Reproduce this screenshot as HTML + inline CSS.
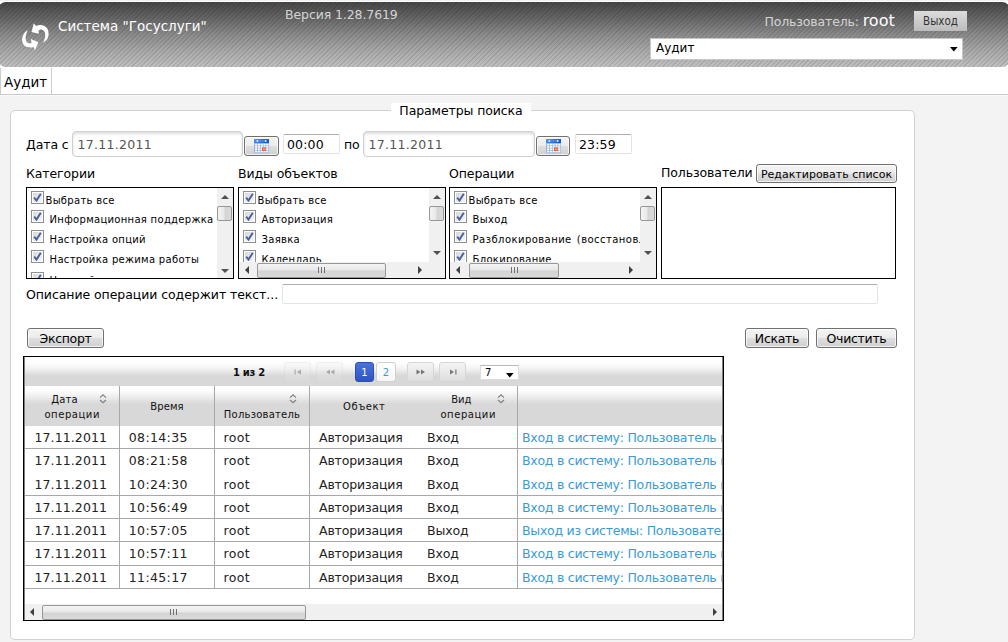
<!DOCTYPE html>
<html lang="ru">
<head>
<meta charset="utf-8">
<title>Аудит</title>
<style>
html,body{margin:0;padding:0;}
body{width:1008px;height:642px;overflow:hidden;position:relative;background:#f3f3f3;font-family:"DejaVu Sans","Liberation Sans",sans-serif;font-size:12.5px;color:#000;letter-spacing:-0.1px;}
.a{position:absolute;white-space:nowrap;box-sizing:border-box;}
#topwhite{left:0;top:0;width:1008px;height:94px;background:#fff;}
#topline{left:0;top:0;width:1008px;height:1px;background:#f0f0f0;}
#hdr{left:-2px;top:2px;width:1012px;height:65px;border-radius:8px;overflow:hidden;
 background:linear-gradient(to bottom,#464646 0%,#666666 25%,#8b8b8b 50%,#a9a9a9 75%,#c0c0c0 100%);}
#hdr .stripes{position:absolute;left:0;top:0;width:100%;height:100%;
 background:repeating-linear-gradient(135deg,rgba(0,0,0,0.11) 0,rgba(0,0,0,0.11) 0.9px,rgba(0,0,0,0) 1.3px,rgba(0,0,0,0) 3.18px);}
#title{left:58px;top:16px;font-size:13.5px;color:#fff;line-height:20px;letter-spacing:0;}
#ver{left:285px;top:5px;font-size:12.5px;color:#d4d4d4;line-height:20px;letter-spacing:-0.1px;}
#user{left:764.5px;top:9px;font-size:12.5px;color:#d4d4d4;line-height:24px;letter-spacing:-0.15px;}
#user b{font-weight:normal;font-size:16px;color:#fff;letter-spacing:0;}
#exit{left:914px;top:11px;width:53px;height:20px;background:linear-gradient(#dcdcdc,#bcbcbc);color:#333;font-family:"DejaVu Sans Condensed","DejaVu Sans",sans-serif;font-size:11.5px;line-height:20px;text-align:center;letter-spacing:0;}
#sel{left:650px;top:38px;width:313px;height:22px;background:#fff;border:1px solid #c8c8c8;font-size:12px;line-height:18px;padding-left:5px;letter-spacing:0;}
#sel svg{position:absolute;left:299px;top:8px;}
#tabline{left:0;top:94px;width:1008px;height:1px;background:#c9c9c9;box-shadow:0 1px 0 #fafafa;}
#tab{left:0;top:68px;width:52px;height:26px;border-left:1px solid #ccc;border-right:1px solid #ccc;font-size:13.5px;line-height:28px;padding-left:3px;letter-spacing:0;}
#fs{left:10px;top:110px;width:905px;height:530px;background:#fff;border:1px solid #d2d2d2;border-radius:5px;}
#legend{left:391px;top:103px;width:140px;height:16px;background:#fff;text-align:center;line-height:16px;}
.lbl{line-height:16px;}
.inp{background:#fff;border:1px solid #cfcfcf;border-radius:4px;box-shadow:inset 0 2px 3px rgba(0,0,0,0.13);color:#555;padding-left:4.5px;letter-spacing:0.3px;}
.tinp{border-radius:2px;background:#fff;border:1px solid #e2e3ea;border-top-color:#abadb3;color:#000;padding-left:3px;letter-spacing:0.15px;}
.btn{border:1px solid #707070;border-radius:3px;background:linear-gradient(#f4f4f4 0%,#ececec 48%,#dedede 52%,#d0d0d0 100%);box-shadow:inset 0 0 0 1px rgba(255,255,255,0.7);text-align:center;color:#000;}
.box{border:1px solid #000;background:#fff;overflow:hidden;}
.cb{width:13px;height:13px;border:1px solid #8e8f8f;background:#fff;}
.cb:before{content:"";position:absolute;left:1px;top:1px;width:9px;height:9px;background:linear-gradient(135deg,#d6d9dc,#f6f6f6);}
.cb svg{position:absolute;left:1px;top:1px;}
.it{font-size:10px;letter-spacing:0.3px;line-height:14px;color:#000;}
.sbv{background:#f0f0f0;width:16px;}
.sbh{background:#f0f0f0;height:16px;}
.thv{border:1px solid #979797;border-radius:2px;background:linear-gradient(to right,#f4f4f4 0%,#e8e8e8 45%,#d4d4d4 55%,#dadada 100%);}
.thh{border:1px solid #979797;border-radius:2px;background:linear-gradient(to bottom,#f4f4f4 0%,#e8e8e8 45%,#d4d4d4 55%,#dadada 100%);}
.tri{width:0;height:0;border:4px solid transparent;}
.up{border-bottom:4px solid #505050;border-top:none;border-left-width:4px;border-right-width:4px;}
.dn{border-top:4px solid #505050;border-bottom:none;border-left-width:4px;border-right-width:4px;}
.lt{border-right:4px solid #404040;border-left:none;border-top-width:4px;border-bottom-width:4px;}
.rt{border-left:4px solid #404040;border-right:none;border-top-width:4px;border-bottom-width:4px;}
.grip{width:7px;height:6px;background:repeating-linear-gradient(to right,#707070 0,#707070 1px,transparent 1px,transparent 2px,transparent 2px,transparent 3px);}
#grid{left:23px;top:356px;width:701px;height:265px;border:1px solid #000;box-shadow:inset 0 0 0 1px rgba(0,0,0,0.5);background:#fff;overflow:hidden;}
#pag{left:25px;top:357px;width:697px;height:29px;background:linear-gradient(#ffffff 0%,#fdfdfd 22%,#f1f1f1 42%,#dfdfdf 58%,#d8d8d8 66%,#d8d8d8 100%);}
#thead{left:25px;top:386px;width:697px;height:40px;background:linear-gradient(#ffffff 0%,#fdfdfd 12%,#eeeeee 27%,#dddddd 40%,#d8d8d8 47%,#d8d8d8 100%);}
.th{font-size:10px;letter-spacing:0;color:#111;line-height:14px;text-align:center;}
.vl{width:1px;background:#a8a8a8;}
.hl{height:1px;background:#a8a8a8;left:25px;width:697px;}
.td{font-size:12.5px;letter-spacing:-0.15px;color:#222;line-height:16px;}
.lnk{color:#3a9bd3;}
.pb{border:1px solid #d6d6d6;border-radius:3px;background:linear-gradient(#f4f4f4,#dedede);}
</style>
</head>
<body>
<div class="a" id="topwhite"></div><div class="a" id="topline"></div>
<div class="a" id="hdr"><div class="stripes"></div></div>
<svg class="a" style="left:15px;top:17px" width="40" height="40" viewBox="0 0 40 40"><path d="M28.30 25.90 C28.98 25.22 31.52 23.32 32.40 21.80 C33.28 20.28 33.60 18.47 33.60 16.80 C33.60 15.13 33.12 13.10 32.40 11.80 C31.68 10.50 30.55 9.62 29.30 9.00 C28.05 8.38 26.25 8.10 24.90 8.10 C23.55 8.10 21.82 8.85 21.20 9.00 L18.70 6.50 L16.50 15.00 L24.00 16.80 L23.40 13.40 C23.87 13.25 25.27 12.40 26.20 12.50 C27.13 12.60 28.33 13.18 29.00 14.00 C29.67 14.82 30.10 16.10 30.20 17.40 C30.30 18.70 29.92 20.38 29.60 21.80 C29.28 23.22 28.52 25.22 28.30 25.90 Z" fill="#fff"/><path d="M13.10 13.10 C12.47 13.62 10.28 14.85 9.30 16.20 C8.32 17.55 7.45 19.53 7.20 21.20 C6.95 22.87 7.18 24.80 7.80 26.20 C8.42 27.60 9.60 28.88 10.90 29.60 C12.20 30.32 14.30 30.45 15.60 30.50 C16.90 30.55 18.18 30.00 18.70 29.90 L19.90 33.30 L23.40 25.20 L15.90 22.10 L16.50 26.20 C15.98 26.20 14.28 26.57 13.40 26.20 C12.52 25.83 11.67 24.93 11.20 24.00 C10.73 23.07 10.55 21.90 10.60 20.60 C10.65 19.30 11.08 17.45 11.50 16.20 C11.92 14.95 12.83 13.62 13.10 13.10 Z" fill="#fff"/></svg>
<div class="a" id="title">Система "Госуслуги"</div>
<div class="a" id="ver">Версия 1.28.7619</div>
<div class="a" id="user">Пользователь: <b>root</b></div>
<div class="a" id="exit">Выход</div>
<div class="a" id="sel">Аудит<svg width="8" height="5" viewBox="0 0 8 5"><path d="M0 0 H7.6 L3.8 4.4 Z" fill="#000"/></svg></div>
<div class="a" id="tabline"></div>
<div class="a" id="tab">Аудит</div>
<div class="a" id="fs"></div>
<div class="a" id="legend">Параметры поиска</div>
<div class="a lbl" style="left:26px;top:136.6px">Дата с</div>
<div class="a inp" style="left:72px;top:131px;width:171px;height:26px;line-height:25px">17.11.2011</div>
<div class="a btn" style="left:244px;top:136px;width:35px;height:20px"><svg class="a" style="left:9px;top:2px" width="15" height="15" viewBox="0 0 15 15">
<defs><linearGradient id="cg" x1="0" y1="0" x2="1" y2="0.3"><stop offset="0" stop-color="#5a95f0"/><stop offset="1" stop-color="#1c53d6"/></linearGradient></defs>
<rect x="0" y="0" width="15" height="14.3" fill="#9db5dd"/>
<rect x="0" y="0" width="15" height="4" fill="url(#cg)"/>
<path d="M1.6 2 L4.2 0.8 V3.2 Z M13.4 2 L10.8 0.8 V3.2 Z" fill="#dfeafc"/><rect x="4.2" y="1.6" width="6.6" height="0.8" fill="#6f9ff0"/>
<g fill="#fff"><rect x="1.1" y="4.9" width="2" height="1.6"/><rect x="3.9" y="4.9" width="2" height="1.6"/><rect x="6.7" y="4.9" width="2" height="1.6"/><rect x="9.5" y="4.9" width="2" height="1.6"/><rect x="12.3" y="4.9" width="2" height="1.6"/><rect x="1.1" y="7.2" width="2" height="1.6"/><rect x="3.9" y="7.2" width="2" height="1.6"/><rect x="6.7" y="7.2" width="2" height="1.6"/><rect x="9.5" y="7.2" width="2" height="1.6"/><rect x="12.3" y="7.2" width="2" height="1.6"/><rect x="1.1" y="9.5" width="2" height="1.6"/><rect x="3.9" y="9.5" width="2" height="1.6"/><rect x="6.7" y="9.5" width="2" height="1.6"/><rect x="9.5" y="9.5" width="2" height="1.6"/><rect x="12.3" y="9.5" width="2" height="1.6"/><rect x="1.1" y="11.8" width="2" height="1.6"/><rect x="3.9" y="11.8" width="2" height="1.6"/><rect x="6.7" y="11.8" width="2" height="1.6"/><rect x="9.5" y="11.8" width="2" height="1.6"/><rect x="12.3" y="11.8" width="2" height="1.6"/></g>
<rect x="8" y="8.3" width="3.8" height="3.7" fill="#e8673a"/><rect x="9.1" y="9.4" width="1.6" height="1.5" fill="#f6b596"/>
</svg></div>
<div class="a tinp" style="left:283px;top:134px;width:57px;height:20px;line-height:19px">00:00</div>
<div class="a lbl" style="left:344px;top:136.6px">по</div>
<div class="a inp" style="left:363px;top:131px;width:172px;height:26px;line-height:25px">17.11.2011</div>
<div class="a btn" style="left:536px;top:136px;width:34px;height:20px"><svg class="a" style="left:9px;top:2px" width="15" height="15" viewBox="0 0 15 15">
<defs><linearGradient id="cg2" x1="0" y1="0" x2="1" y2="0.3"><stop offset="0" stop-color="#5a95f0"/><stop offset="1" stop-color="#1c53d6"/></linearGradient></defs>
<rect x="0" y="0" width="15" height="14.3" fill="#9db5dd"/>
<rect x="0" y="0" width="15" height="4" fill="url(#cg2)"/>
<path d="M1.6 2 L4.2 0.8 V3.2 Z M13.4 2 L10.8 0.8 V3.2 Z" fill="#dfeafc"/><rect x="4.2" y="1.6" width="6.6" height="0.8" fill="#6f9ff0"/>
<g fill="#fff"><rect x="1.1" y="4.9" width="2" height="1.6"/><rect x="3.9" y="4.9" width="2" height="1.6"/><rect x="6.7" y="4.9" width="2" height="1.6"/><rect x="9.5" y="4.9" width="2" height="1.6"/><rect x="12.3" y="4.9" width="2" height="1.6"/><rect x="1.1" y="7.2" width="2" height="1.6"/><rect x="3.9" y="7.2" width="2" height="1.6"/><rect x="6.7" y="7.2" width="2" height="1.6"/><rect x="9.5" y="7.2" width="2" height="1.6"/><rect x="12.3" y="7.2" width="2" height="1.6"/><rect x="1.1" y="9.5" width="2" height="1.6"/><rect x="3.9" y="9.5" width="2" height="1.6"/><rect x="6.7" y="9.5" width="2" height="1.6"/><rect x="9.5" y="9.5" width="2" height="1.6"/><rect x="12.3" y="9.5" width="2" height="1.6"/><rect x="1.1" y="11.8" width="2" height="1.6"/><rect x="3.9" y="11.8" width="2" height="1.6"/><rect x="6.7" y="11.8" width="2" height="1.6"/><rect x="9.5" y="11.8" width="2" height="1.6"/><rect x="12.3" y="11.8" width="2" height="1.6"/></g>
<rect x="8" y="8.3" width="3.8" height="3.7" fill="#e8673a"/><rect x="9.1" y="9.4" width="1.6" height="1.5" fill="#f6b596"/>
</svg></div>
<div class="a tinp" style="left:575px;top:134px;width:57px;height:20px;line-height:19px">23:59</div>
<div class="a lbl" style="left:26px;top:165.6px">Категории</div>
<div class="a lbl" style="left:238px;top:165.6px">Виды объектов</div>
<div class="a lbl" style="left:449px;top:165.6px">Операции</div>
<div class="a lbl" style="left:661px;top:164.8px">Пользователи</div>
<div class="a btn" style="left:756px;top:164px;width:141px;height:19px;line-height:20px;font-size:11px;letter-spacing:0">Редактировать список</div>
<div class="a box" style="left:26px;top:187px;width:208px;height:92px">
<div class="a cb" style="left:4px;top:3px"><svg width="9" height="9" viewBox="0 0 9 9"><path d="M1.2 4.6 L3.5 7.6 L7.8 0.8" fill="none" stroke="#4a5f9e" stroke-width="1.9"/></svg></div>
<div class="a it" style="left:18.5px;top:6.1px">Выбрать все</div>
<div class="a cb" style="left:4px;top:22px"><svg width="9" height="9" viewBox="0 0 9 9"><path d="M1.2 4.6 L3.5 7.6 L7.8 0.8" fill="none" stroke="#4a5f9e" stroke-width="1.9"/></svg></div>
<div class="a it" style="left:22.6px;top:25.1px">Информационная поддержка</div>
<div class="a cb" style="left:4px;top:42px"><svg width="9" height="9" viewBox="0 0 9 9"><path d="M1.2 4.6 L3.5 7.6 L7.8 0.8" fill="none" stroke="#4a5f9e" stroke-width="1.9"/></svg></div>
<div class="a it" style="left:22.6px;top:44.6px">Настройка опций</div>
<div class="a cb" style="left:4px;top:62px"><svg width="9" height="9" viewBox="0 0 9 9"><path d="M1.2 4.6 L3.5 7.6 L7.8 0.8" fill="none" stroke="#4a5f9e" stroke-width="1.9"/></svg></div>
<div class="a it" style="left:22.6px;top:65.2px">Настройка режима работы</div>
<div class="a cb" style="left:4px;top:83.5px"><svg width="9" height="9" viewBox="0 0 9 9"><path d="M1.2 4.6 L3.5 7.6 L7.8 0.8" fill="none" stroke="#4a5f9e" stroke-width="1.9"/></svg></div>
<div class="a it" style="left:22.6px;top:85.5px">Настройка</div>
<div class="a sbv" style="left:190px;top:0;height:90px"></div>
<div class="a tri up" style="left:194px;top:7px"></div>
<div class="a thv" style="left:190px;top:18px;width:15px;height:15px"></div>
<div class="a tri dn" style="left:194px;top:81px"></div>
</div>
<div class="a box" style="left:238px;top:187px;width:208px;height:92px">
<div class="a cb" style="left:4px;top:3px"><svg width="9" height="9" viewBox="0 0 9 9"><path d="M1.2 4.6 L3.5 7.6 L7.8 0.8" fill="none" stroke="#4a5f9e" stroke-width="1.9"/></svg></div>
<div class="a it" style="left:18.5px;top:6.1px">Выбрать все</div>
<div class="a cb" style="left:4px;top:22px"><svg width="9" height="9" viewBox="0 0 9 9"><path d="M1.2 4.6 L3.5 7.6 L7.8 0.8" fill="none" stroke="#4a5f9e" stroke-width="1.9"/></svg></div>
<div class="a it" style="left:22.6px;top:25.1px">Авторизация</div>
<div class="a cb" style="left:4px;top:42px"><svg width="9" height="9" viewBox="0 0 9 9"><path d="M1.2 4.6 L3.5 7.6 L7.8 0.8" fill="none" stroke="#4a5f9e" stroke-width="1.9"/></svg></div>
<div class="a it" style="left:22.6px;top:44.6px">Заявка</div>
<div class="a cb" style="left:4px;top:62px"><svg width="9" height="9" viewBox="0 0 9 9"><path d="M1.2 4.6 L3.5 7.6 L7.8 0.8" fill="none" stroke="#4a5f9e" stroke-width="1.9"/></svg></div>
<div class="a it" style="left:22.6px;top:65.2px">Календарь</div>
<div class="a sbv" style="left:190px;top:0;height:74px"></div>
<div class="a tri up" style="left:194px;top:7px"></div>
<div class="a thv" style="left:190px;top:18px;width:15px;height:15px"></div>
<div class="a tri dn" style="left:194px;top:63px"></div>
<div class="a sbh" style="left:0;top:74px;width:206px"></div>
<div class="a tri lt" style="left:6px;top:78px"></div>
<div class="a thh" style="left:18px;top:75px;width:129px;height:15px"></div>
<div class="a grip" style="left:79px;top:79px"></div>
<div class="a tri rt" style="left:179px;top:78px"></div>
</div>
<div class="a box" style="left:449px;top:187px;width:208px;height:92px">
<div class="a cb" style="left:4px;top:3px"><svg width="9" height="9" viewBox="0 0 9 9"><path d="M1.2 4.6 L3.5 7.6 L7.8 0.8" fill="none" stroke="#4a5f9e" stroke-width="1.9"/></svg></div>
<div class="a it" style="left:18.5px;top:6.1px">Выбрать все</div>
<div class="a cb" style="left:4px;top:22px"><svg width="9" height="9" viewBox="0 0 9 9"><path d="M1.2 4.6 L3.5 7.6 L7.8 0.8" fill="none" stroke="#4a5f9e" stroke-width="1.9"/></svg></div>
<div class="a it" style="left:22.6px;top:25.1px">Выход</div>
<div class="a cb" style="left:4px;top:42px"><svg width="9" height="9" viewBox="0 0 9 9"><path d="M1.2 4.6 L3.5 7.6 L7.8 0.8" fill="none" stroke="#4a5f9e" stroke-width="1.9"/></svg></div>
<div class="a it" style="left:22.6px;top:44.6px;letter-spacing:0.45px;word-spacing:1.5px">Разблокирование (восстановление)</div>
<div class="a cb" style="left:4px;top:62px"><svg width="9" height="9" viewBox="0 0 9 9"><path d="M1.2 4.6 L3.5 7.6 L7.8 0.8" fill="none" stroke="#4a5f9e" stroke-width="1.9"/></svg></div>
<div class="a it" style="left:22.6px;top:65.2px">Блокирование</div>
<div class="a sbv" style="left:190px;top:0;height:74px"></div>
<div class="a tri up" style="left:194px;top:7px"></div>
<div class="a thv" style="left:190px;top:18px;width:15px;height:15px"></div>
<div class="a tri dn" style="left:194px;top:63px"></div>
<div class="a sbh" style="left:0;top:74px;width:206px"></div>
<div class="a tri lt" style="left:6px;top:78px"></div>
<div class="a thh" style="left:19px;top:75px;width:90px;height:15px"></div>
<div class="a grip" style="left:61px;top:79px"></div>
<div class="a tri rt" style="left:179px;top:78px"></div>
</div>
<div class="a box" style="left:661px;top:187px;width:235px;height:92px"></div>
<div class="a lbl" style="left:26px;top:287px;letter-spacing:-0.07px">Описание операции содержит текст...</div>
<div class="a tinp" style="left:282px;top:284px;width:596px;height:20px"></div>
<div class="a btn" style="left:27px;top:328px;width:77px;height:20px;line-height:20px;letter-spacing:-0.3px">Экспорт</div>
<div class="a btn" style="left:745px;top:328px;width:64px;height:20px;line-height:20px;letter-spacing:-0.3px">Искать</div>
<div class="a btn" style="left:816px;top:328px;width:81px;height:20px;line-height:20px;letter-spacing:-0.3px">Очистить</div>
<div class="a" id="grid"></div>
<div class="a" id="pag"></div>
<div class="a" id="thead"></div>
<div class="a" style="left:233px;top:366px;font-size:10px;font-weight:bold;line-height:14px;letter-spacing:-0.3px;color:#111">1 из 2</div>
<div class="a pb" style="left:284px;top:362px;width:27px;height:20px;opacity:0.35"></div>
<svg class="a" style="left:293.5px;top:369px" width="8" height="6"><rect x="0.5" y="0.5" width="1.2" height="5" fill="#aaa"/><path d="M7 0.5 L3 3 L7 5.5Z" fill="#aaa"/></svg>
<div class="a pb" style="left:316px;top:362px;width:27px;height:20px;opacity:0.35"></div>
<svg class="a" style="left:324.5px;top:369px" width="10" height="6"><path d="M5 0.5 L1 3 L5 5.5Z M9.5 0.5 L5.5 3 L9.5 5.5Z" fill="#aaa"/></svg>
<div class="a" style="left:355px;top:362px;width:19px;height:20px;border-radius:3px;background:linear-gradient(#4a72dc,#2f55c0);border:1px solid #2c4fb5;color:#fff;font-size:10px;line-height:20px;text-align:center;letter-spacing:0">1</div>
<div class="a" style="left:376px;top:362px;width:20px;height:20px;border-radius:3px;background:linear-gradient(#ffffff,#f6f6f6);border:1px solid #d0d0d0;color:#3a9bd3;font-size:10px;line-height:20px;text-align:center;letter-spacing:0">2</div>
<div class="a pb" style="left:407px;top:362px;width:27px;height:20px;opacity:1"></div>
<svg class="a" style="left:415.5px;top:369px" width="10" height="6"><path d="M0.5 0.5 L4.5 3 L0.5 5.5Z M5 0.5 L9 3 L5 5.5Z" fill="#777"/></svg>
<div class="a pb" style="left:439px;top:362px;width:27px;height:20px;opacity:1"></div>
<svg class="a" style="left:448.5px;top:369px" width="8" height="6"><path d="M1 0.5 L5 3 L1 5.5Z" fill="#777"/><rect x="6.3" y="0.5" width="1.2" height="5" fill="#777"/></svg>
<div class="a" style="left:480px;top:365px;width:39px;height:15px;background:#fff;border:1px solid #ddd;border-top-color:#bbb;font-size:10px;line-height:13px;padding-left:4px;letter-spacing:0">7</div>
<svg class="a" style="left:506px;top:372.5px" width="8" height="5" viewBox="0 0 8 5"><path d="M0 0 H7.6 L3.8 4.4 Z" fill="#000"/></svg>
<div class="a th" style="left:4.5px;top:393.3px;width:120px;letter-spacing:0.1px">Дата</div>
<div class="a th" style="left:12.200000000000003px;top:408.2px;width:120px;letter-spacing:0.55px">операции</div>
<div class="a th" style="left:107px;top:400.2px;width:120px;letter-spacing:0.1px">Время</div>
<div class="a th" style="left:202px;top:407.6px;width:120px;letter-spacing:0.22px">Пользователь</div>
<div class="a th" style="left:304.3px;top:400.2px;width:120px;letter-spacing:0.55px">Объект</div>
<div class="a th" style="left:401.3px;top:393.3px;width:120px;letter-spacing:0px">Вид</div>
<div class="a th" style="left:408.2px;top:408.2px;width:120px;letter-spacing:0.55px">операции</div>
<div class="a" style="left:99.3px;top:392.5px;width:8px;height:11px;line-height:0"><svg width="8" height="11" viewBox="0 0 8 11"><path d="M1 4.6 L4 1.8 L7 4.6 M1 7.0 L4 9.8 L7 7.0" fill="none" stroke="#808080" stroke-width="1.2"/></svg></div>
<div class="a" style="left:289px;top:392.5px;width:8px;height:11px;line-height:0"><svg width="8" height="11" viewBox="0 0 8 11"><path d="M1 4.6 L4 1.8 L7 4.6 M1 7.0 L4 9.8 L7 7.0" fill="none" stroke="#808080" stroke-width="1.2"/></svg></div>
<div class="a" style="left:497px;top:392.5px;width:8px;height:11px;line-height:0"><svg width="8" height="11" viewBox="0 0 8 11"><path d="M1 4.6 L4 1.8 L7 4.6 M1 7.0 L4 9.8 L7 7.0" fill="none" stroke="#808080" stroke-width="1.2"/></svg></div>
<div class="a vl" style="left:119px;top:386px;height:203px"></div>
<div class="a vl" style="left:214px;top:386px;height:203px"></div>
<div class="a vl" style="left:309px;top:386px;height:203px"></div>
<div class="a vl" style="left:517px;top:386px;height:203px"></div>
<div class="a hl" style="top:448px"></div>
<div class="a hl" style="top:495px"></div>
<div class="a hl" style="top:518px"></div>
<div class="a hl" style="top:541px"></div>
<div class="a hl" style="top:565px"></div>
<div class="a hl" style="top:588px"></div>
<div class="a" style="left:25px;top:426px;width:697px;height:170px;overflow:hidden">
<div class="a td" style="left:9.5px;top:4.099999999999966px;letter-spacing:0.1px">17.11.2011</div>
<div class="a td" style="left:103.80000000000001px;top:4.099999999999966px;letter-spacing:0.35px">08:14:35</div>
<div class="a td" style="left:198.5px;top:4.099999999999966px;letter-spacing:0.4px">root</div>
<div class="a td" style="left:294px;top:4.099999999999966px">Авторизация</div>
<div class="a td" style="left:402px;top:4.099999999999966px">Вход</div>
<div class="a td lnk" style="left:497px;top:4.099999999999966px;letter-spacing:-0.25px">Вход в систему: Пользователь root</div>
<div class="a td" style="left:9.5px;top:27.099999999999966px;letter-spacing:0.1px">17.11.2011</div>
<div class="a td" style="left:103.80000000000001px;top:27.099999999999966px;letter-spacing:0.35px">08:21:58</div>
<div class="a td" style="left:198.5px;top:27.099999999999966px;letter-spacing:0.4px">root</div>
<div class="a td" style="left:294px;top:27.099999999999966px">Авторизация</div>
<div class="a td" style="left:402px;top:27.099999999999966px">Вход</div>
<div class="a td lnk" style="left:497px;top:27.099999999999966px;letter-spacing:-0.25px">Вход в систему: Пользователь root</div>
<div class="a td" style="left:9.5px;top:50.69999999999999px;letter-spacing:0.1px">17.11.2011</div>
<div class="a td" style="left:103.80000000000001px;top:50.69999999999999px;letter-spacing:0.35px">10:24:30</div>
<div class="a td" style="left:198.5px;top:50.69999999999999px;letter-spacing:0.4px">root</div>
<div class="a td" style="left:294px;top:50.69999999999999px">Авторизация</div>
<div class="a td" style="left:402px;top:50.69999999999999px">Вход</div>
<div class="a td lnk" style="left:497px;top:50.69999999999999px;letter-spacing:-0.25px">Вход в систему: Пользователь root</div>
<div class="a td" style="left:9.5px;top:74.19999999999999px;letter-spacing:0.1px">17.11.2011</div>
<div class="a td" style="left:103.80000000000001px;top:74.19999999999999px;letter-spacing:0.35px">10:56:49</div>
<div class="a td" style="left:198.5px;top:74.19999999999999px;letter-spacing:0.4px">root</div>
<div class="a td" style="left:294px;top:74.19999999999999px">Авторизация</div>
<div class="a td" style="left:402px;top:74.19999999999999px">Вход</div>
<div class="a td lnk" style="left:497px;top:74.19999999999999px;letter-spacing:-0.25px">Вход в систему: Пользователь root</div>
<div class="a td" style="left:9.5px;top:97.20000000000005px;letter-spacing:0.1px">17.11.2011</div>
<div class="a td" style="left:103.80000000000001px;top:97.20000000000005px;letter-spacing:0.35px">10:57:05</div>
<div class="a td" style="left:198.5px;top:97.20000000000005px;letter-spacing:0.4px">root</div>
<div class="a td" style="left:294px;top:97.20000000000005px">Авторизация</div>
<div class="a td" style="left:402px;top:97.20000000000005px">Выход</div>
<div class="a td lnk" style="left:497px;top:97.20000000000005px;letter-spacing:-0.25px">Выход из системы: Пользователь root</div>
<div class="a td" style="left:9.5px;top:120.20000000000005px;letter-spacing:0.1px">17.11.2011</div>
<div class="a td" style="left:103.80000000000001px;top:120.20000000000005px;letter-spacing:0.35px">10:57:11</div>
<div class="a td" style="left:198.5px;top:120.20000000000005px;letter-spacing:0.4px">root</div>
<div class="a td" style="left:294px;top:120.20000000000005px">Авторизация</div>
<div class="a td" style="left:402px;top:120.20000000000005px">Вход</div>
<div class="a td lnk" style="left:497px;top:120.20000000000005px;letter-spacing:-0.25px">Вход в систему: Пользователь root</div>
<div class="a td" style="left:9.5px;top:144.20000000000005px;letter-spacing:0.1px">17.11.2011</div>
<div class="a td" style="left:103.80000000000001px;top:144.20000000000005px;letter-spacing:0.35px">11:45:17</div>
<div class="a td" style="left:198.5px;top:144.20000000000005px;letter-spacing:0.4px">root</div>
<div class="a td" style="left:294px;top:144.20000000000005px">Авторизация</div>
<div class="a td" style="left:402px;top:144.20000000000005px">Вход</div>
<div class="a td lnk" style="left:497px;top:144.20000000000005px;letter-spacing:-0.25px">Вход в систему: Пользователь root</div>
</div>
<div class="a sbh" style="left:25px;top:604px;width:697px"></div>
<div class="a tri lt" style="left:30px;top:608px"></div>
<div class="a thh" style="left:42px;top:605px;width:264px;height:15px"></div>
<div class="a grip" style="left:170px;top:609px"></div>
<div class="a tri rt" style="left:712.5px;top:608px"></div>
</body>
</html>
